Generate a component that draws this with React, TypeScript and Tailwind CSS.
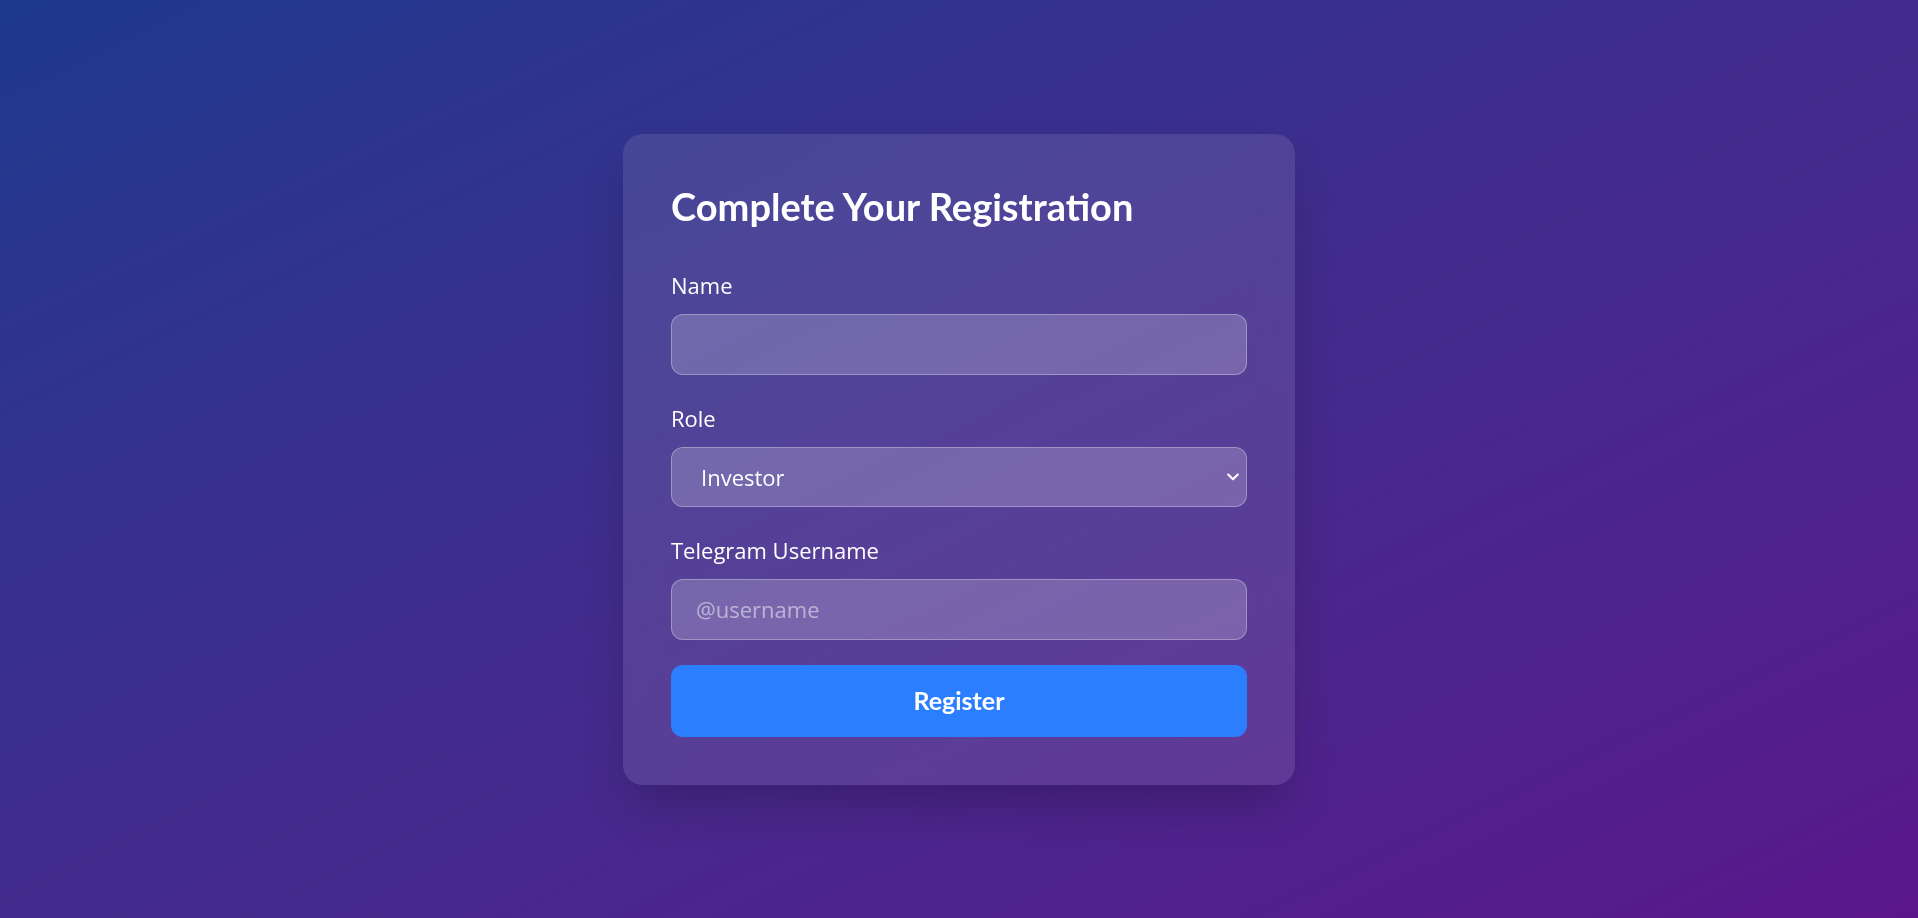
import { useState } from "react";

const body = { fontFamily: "'Open Sans', 'Noto Sans', 'Liberation Sans', sans-serif" };
const heading = { fontFamily: "Lato, 'Open Sans', 'Liberation Sans', sans-serif" };

export default function App() {
  const [role, setRole] = useState("investor");

  return (
    <div
      className="min-h-screen w-full flex items-center justify-center bg-gradient-to-br from-blue-900 to-purple-900"
      style={body}
    >
      <div className="w-[672px] rounded-[20px] bg-white/10 p-12 shadow-2xl backdrop-blur-lg">
        <h2 className="mb-10 text-[38px] leading-[48px] font-bold text-white" style={heading}>
          Complete Your Registration
        </h2>

        <label className="mb-3.5 block text-[22px] leading-[30px] text-white">Name</label>
        <input
          type="text"
          className="mb-7 block w-full rounded-xl border border-white/30 bg-white/20 px-6 py-[15px] text-[22px] leading-[29px] text-white outline-none"
        />

        <label className="mb-3.5 block text-[22px] leading-[30px] text-white">Role</label>
        <div className="relative mb-7">
          <select
            value={role}
            onChange={(e) => setRole(e.target.value)}
            className="block w-full appearance-none rounded-xl border border-white/30 bg-white/20 py-[15px] pl-[29px] pr-10 text-[22px] leading-[28px] text-white outline-none"
          >
            <option value="investor" className="text-black">Investor</option>
            <option value="founder" className="text-black">Founder</option>
            <option value="mentor" className="text-black">Mentor</option>
          </select>
          <svg
            className="pointer-events-none absolute right-[8px] top-1/2 -translate-y-1/2"
            width="12"
            height="8"
            viewBox="0 0 12 8"
            fill="none"
          >
            <path d="M1.2 1.5l4.8 4.8 4.8-4.8" stroke="white" strokeWidth="2" strokeLinecap="round" strokeLinejoin="round" />
          </svg>
        </div>

        <label className="mb-3.5 block text-[22px] leading-[30px] text-white">Telegram Username</label>
        <input
          type="text"
          placeholder="@username"
          className="block w-full rounded-xl border border-white/30 bg-white/20 px-6 py-[15px] text-[22px] leading-[29px] text-white outline-none placeholder:text-white/50"
        />

        <button
          className="mt-[25px] block h-[72px] w-full rounded-xl bg-blue-500 text-[25px] font-bold text-white"
          style={heading}
        >
          Register
        </button>
      </div>
    </div>
  );
}
